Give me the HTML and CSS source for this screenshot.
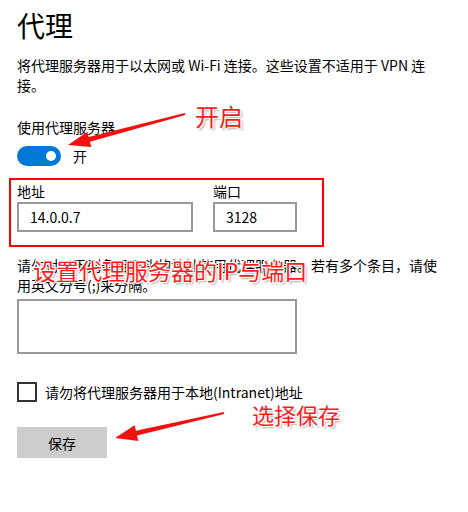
FILE: index.html
```html
<!DOCTYPE html>
<html lang="zh-CN">
<head>
<meta charset="utf-8">
<title>代理</title>
<link rel="stylesheet" href="styles.css">
</head>
<body>
<main class="page">
  <h1 class="title">代理</h1>
  <p class="desc">将代理服务器用于以太网或 Wi-Fi 连接。这些设置不适用于 VPN 连<br>接。</p>

  <div class="label">使用代理服务器</div>
  <div class="toggle-row">
    <span class="toggle"><span class="knob"></span></span>
    <span class="toggle-text">开</span>
  </div>

  <div class="fields">
    <div class="field">
      <div class="field-label">地址</div>
      <div class="input input-wide">14.0.0.7</div>
    </div>
    <div class="field">
      <div class="field-label">端口</div>
      <div class="input input-narrow">3128</div>
    </div>
  </div>

  <p class="help">请勿对以下列条目开头的地址使用代理服务器。若有多个条目，请使<br>用英文分号(;)来分隔。</p>
  <div class="textarea"></div>

  <div class="check-row">
    <span class="checkbox"></span>
    <span class="check-text">请勿将代理服务器用于本地(Intranet)地址</span>
  </div>

  <button class="save" type="button">保存</button>

  <div class="mark-box"></div>
  <div class="note note-on">开启</div>
  <div class="note note-ip">设置代理服务器的IP与端口</div>
  <div class="note note-save">选择保存</div>
  <svg class="arrows" width="468" height="512" viewBox="0 0 468 512">
    <polygon fill="#f31010" points="184.7,113.0 88.7,137.0 87.3,131.7 68,145 91.3,147.1 89.9,141.8 185.3,115.0"/>
    <polygon fill="#f31010" points="223.8,412.0 135.9,430.7 134.7,425.3 115,438 138.3,440.9 137.1,435.5 224.2,414.0"/>
  </svg>
</main>
</body>
</html>
```

FILE: styles.css
```css
html, body {
  margin: 0;
  padding: 0;
  background: #fff;
}

.page {
  position: relative;
  width: 468px;
  height: 512px;
  box-sizing: border-box;
  padding: 7px 0 0 17px;
  font-family: "Noto Sans CJK SC", "Noto Sans", sans-serif;
  font-size: 14px;
  line-height: 20px;
  color: #000;
  overflow: hidden;
}

.title {
  margin: 0;
  font-size: 28px;
  line-height: 36px;
  font-weight: 400;
}

.desc {
  margin: 12px 0 0;
}

.label {
  margin-top: 22px;
}

.toggle-row {
  display: flex;
  align-items: center;
  gap: 12px;
  margin-top: 9px;
  height: 20px;
}

.toggle {
  display: flex;
  align-items: center;
  justify-content: flex-end;
  box-sizing: border-box;
  width: 44px;
  height: 20px;
  padding-right: 5px;
  border-radius: 10px;
  background: #0078d7;
}

.knob {
  width: 10px;
  height: 10px;
  border-radius: 50%;
  background: #fff;
}

.fields {
  display: flex;
  gap: 20px;
  margin-top: 15px;
}

.field-label {
  margin-bottom: 1px;
}

.input {
  box-sizing: border-box;
  height: 30px;
  border: 2px solid #999;
  line-height: 26px;
  padding-left: 11px;
}

.input-wide {
  width: 176px;
}

.input-narrow {
  width: 84px;
}

.help {
  margin: 23px 0 0;
}

.textarea {
  box-sizing: border-box;
  width: 280px;
  height: 55px;
  margin-top: 4px;
  border: 2px solid #999;
}

.check-row {
  display: flex;
  align-items: center;
  gap: 8px;
  margin-top: 28px;
}

.checkbox {
  box-sizing: border-box;
  width: 20px;
  height: 20px;
  border: 2px solid #333;
}

.save {
  display: block;
  width: 90px;
  height: 31px;
  margin-top: 25px;
  padding: 0;
  border: 0;
  background: #ccc;
  font: inherit;
  color: #000;
}

.mark-box {
  position: absolute;
  left: 9px;
  top: 178px;
  width: 315px;
  height: 69px;
  box-sizing: border-box;
  border: 2px solid #f00;
}

.note {
  position: absolute;
  color: #ff1a1a;
  white-space: nowrap;
  line-height: 1;
  text-shadow:
    1px 0 0 #fff, -1px 0 0 #fff, 0 1px 0 #fff, 0 -1px 0 #fff,
    1px 1px 0 #fff, -1px -1px 0 #fff, 1px -1px 0 #fff, -1px 1px 0 #fff,
    2px 2px 2px rgba(0, 0, 0, 0.35);
}

.note-on {
  left: 195px;
  top: 104px;
  font-size: 24px;
}

.note-ip {
  left: 33px;
  top: 259px;
  font-size: 23px;
}

.note-save {
  left: 252px;
  top: 403px;
  font-size: 22px;
}

.arrows {
  position: absolute;
  left: 0;
  top: 0;
  pointer-events: none;
}
```
